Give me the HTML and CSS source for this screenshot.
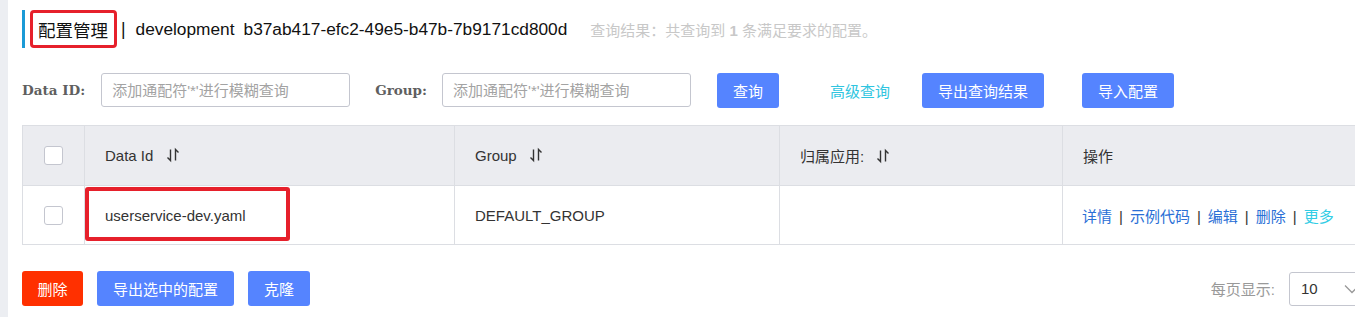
FILE: index.html
```html
<!DOCTYPE html>
<html lang="zh-CN">
<head>
<meta charset="utf-8">
<title>配置管理</title>
<link rel="stylesheet" href="styles.css">
</head>
<body>
<div class="page">
  <aside class="strip"></aside>
  <main class="content">
    <div class="title-row">
      <span class="title-box">配置管理</span>
      <span class="title-sep">|</span>
      <span class="title-env">development</span>
      <span class="title-ns">b37ab417-efc2-49e5-b47b-7b9171cd800d</span>
      <span class="title-result">查询结果：共查询到 <b>1</b> 条满足要求的配置。</span>
    </div>

    <div class="search-row">
      <label class="label">Data ID:</label>
      <input class="input input-id" type="text" placeholder="添加通配符'*'进行模糊查询">
      <label class="label label-group">Group:</label>
      <input class="input input-group" type="text" placeholder="添加通配符'*'进行模糊查询">
      <button class="btn btn-primary btn-query">查询</button>
      <a class="link-advanced">高级查询</a>
      <button class="btn btn-primary btn-export">导出查询结果</button>
      <button class="btn btn-primary btn-import">导入配置</button>
    </div>

    <table class="grid">
      <colgroup>
        <col class="c-check"><col class="c-id"><col class="c-group"><col class="c-app"><col class="c-op">
      </colgroup>
      <thead>
        <tr>
          <th class="cell-check"><span class="checkbox"></span></th>
          <th>Data Id <svg class="sort" viewBox="0 0 14 16" width="14" height="16"><path d="M4.5 2.5V13.5L1.5 10.5M9.5 13.5V2.5L12.5 5.5"/></svg></th>
          <th>Group <svg class="sort" viewBox="0 0 14 16" width="14" height="16"><path d="M4.5 2.5V13.5L1.5 10.5M9.5 13.5V2.5L12.5 5.5"/></svg></th>
          <th>归属应用: <svg class="sort" viewBox="0 0 14 16" width="14" height="16"><path d="M4.5 2.5V13.5L1.5 10.5M9.5 13.5V2.5L12.5 5.5"/></svg></th>
          <th>操作</th>
        </tr>
      </thead>
      <tbody>
        <tr>
          <td class="cell-check"><span class="checkbox"></span></td>
          <td class="cell-id"><span class="mark"></span>userservice-dev.yaml</td>
          <td>DEFAULT_GROUP</td>
          <td></td>
          <td class="ops">
            <a class="op">详情</a><span class="op-sep">|</span><a class="op">示例代码</a><span class="op-sep">|</span><a class="op">编辑</a><span class="op-sep">|</span><a class="op">删除</a><span class="op-sep">|</span><a class="op op-more">更多</a>
          </td>
        </tr>
      </tbody>
    </table>

    <div class="footer-row">
      <div class="footer-actions">
        <button class="btn btn-danger">删除</button>
        <button class="btn btn-primary">导出选中的配置</button>
        <button class="btn btn-primary">克隆</button>
      </div>
      <div class="pager">
        <span class="pager-label">每页显示:</span>
        <div class="select">
          <span class="select-value">10</span>
          <svg class="chevron" viewBox="0 0 16 10" width="16" height="10"><path d="M1 1.5L8 8.5L15 1.5"/></svg>
        </div>
      </div>
    </div>
  </main>
</div>
</body>
</html>
```

FILE: styles.css
```css
html, body {
  margin: 0;
  padding: 0;
  background: #fff;
  overflow: hidden;
}
body {
  font-family: "Liberation Sans", "Noto Sans CJK SC", sans-serif;
  font-size: 15px;
  color: #333;
}
.page {
  display: flex;
  min-height: 317px;
}
.strip {
  flex: 0 0 8px;
  background: #eceef2;
}
.content {
  flex: 0 0 1347px;
  width: 1347px;
  padding-left: 14px;
}

/* title */
.title-row {
  display: flex;
  align-items: center;
  height: 38px;
  margin-top: 10px;
  border-left: 3px solid #1b9ad6;
  padding-left: 5px;
  font-size: 17.5px;
  color: #111;
  white-space: nowrap;
}
.title-box {
  display: flex;
  align-items: center;
  height: 38px;
  box-sizing: border-box;
  border: 3px solid #e6202b;
  border-radius: 4px;
  padding: 0 6px 0 5px;
  color: #111;
}
.title-sep {
  margin-left: 4px;
  margin-right: 10px;
}
.title-env, .title-ns {
  font-size: 17.3px;
}
.title-ns {
  margin-left: 9px;
}
.title-result {
  margin-left: 23px;
  font-size: 15px;
  color: #c8c8c8;
}
.title-result b {
  font-weight: bold;
}

/* search */
.search-row {
  display: flex;
  align-items: center;
  margin-top: 25px;
  height: 34px;
}
.label {
  font-family: "DejaVu Serif", serif;
  font-weight: bold;
  font-size: 13.5px;
  color: #5f5f5f;
}
.label-group {
  margin-left: 25px;
}
.input {
  box-sizing: border-box;
  width: 249px;
  height: 34px;
  border: 1px solid #c4c6cf;
  border-radius: 3px;
  padding: 0 10px;
  font-family: "Liberation Sans", "Noto Sans CJK SC", sans-serif;
  font-size: 15px;
  color: #333;
  outline: none;
}
.input::placeholder {
  color: #a3a3a3;
}
.input-id {
  margin-left: 16px;
}
.input-group {
  margin-left: 15px;
}
.btn {
  box-sizing: border-box;
  height: 35px;
  border: none;
  border-radius: 3px;
  padding: 0 16px;
  font-family: "Liberation Sans", "Noto Sans CJK SC", sans-serif;
  font-size: 15px;
  color: #fff;
  white-space: nowrap;
  cursor: pointer;
}
.btn-primary {
  background: #5584ff;
}
.btn-danger {
  background: #ff3000;
  width: 61px;
  padding: 0;
  text-align: center;
}
.btn-query {
  margin-left: 26px;
}
.link-advanced {
  margin-left: 51px;
  color: #2fc5e0;
  font-size: 15px;
}
.btn-export {
  margin-left: 32px;
}
.btn-import {
  margin-left: 38px;
}

/* table */
.grid {
  margin-top: 18px;
  width: 1347px;
  border-collapse: collapse;
  table-layout: fixed;
  font-size: 15px;
  color: #333;
}
.c-check { width: 62px; }
.c-id { width: 370px; }
.c-group { width: 325px; }
.c-app { width: 283px; }
.grid th, .grid td {
  border: 1px solid #dcdee3;
  text-align: left;
  padding: 0 20px;
  white-space: nowrap;
}
.grid th {
  background: #ebecf0;
  font-weight: normal;
  height: 59px;
}
.grid td {
  height: 58px;
}
.grid th:last-child, .grid td:last-child {
  border-right: none;
}
.grid .ops {
  padding-left: 19px;
}
.cell-check {
  text-align: center !important;
  padding: 0 !important;
}
.checkbox {
  display: inline-block;
  vertical-align: middle;
  width: 19px;
  height: 19px;
  box-sizing: border-box;
  border: 1px solid #c4c6cf;
  border-radius: 3px;
  background: #fff;
}
.sort {
  vertical-align: -2px;
  margin-left: 8px;
  fill: none;
  stroke: #333;
  stroke-width: 1.4;
}
.cell-id {
  position: relative;
}
.mark {
  position: absolute;
  left: 0;
  top: 1px;
  width: 205px;
  height: 54px;
  box-sizing: border-box;
  border: 4px solid #e6202b;
  border-radius: 3px;
}
.op {
  color: #2a6fd6;
}
.op-more {
  color: #33cde5;
}
.op-sep {
  margin: 0 7px;
  color: #333;
}

/* footer */
.footer-row {
  display: flex;
  justify-content: space-between;
  align-items: center;
  margin-top: 26px;
}
.footer-actions {
  display: flex;
  gap: 14px;
}
.pager {
  display: flex;
  align-items: center;
}
.pager-label {
  color: #999;
  font-size: 15px;
  margin-right: 14px;
}
.select {
  display: flex;
  align-items: center;
  justify-content: space-between;
  box-sizing: border-box;
  width: 80px;
  height: 34px;
  border: 1px solid #c4c6cf;
  border-radius: 3px;
  padding: 0 8px 0 11px;
  color: #333;
  font-size: 15px;
}
.chevron {
  fill: none;
  stroke: #999;
  stroke-width: 1.3;
}
```
